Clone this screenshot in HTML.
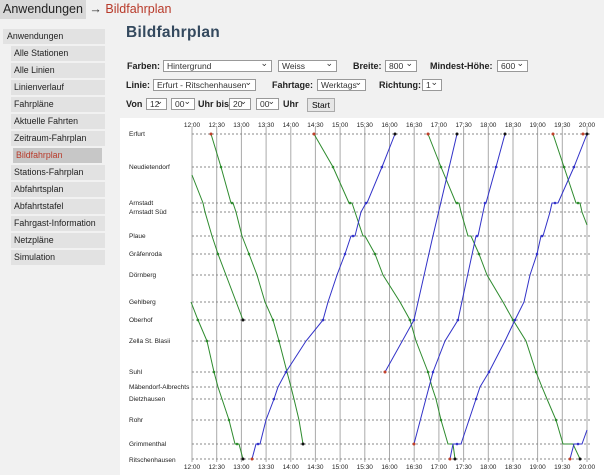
<!DOCTYPE html>
<html><head><meta charset="utf-8"><style>
body{margin:0;width:604px;height:475px;background:#f1f1f1;font-family:"Liberation Sans",sans-serif;position:relative;overflow:hidden}
.top{position:absolute;left:0;top:0;height:19px;font-size:12.5px;line-height:19px}
.top .a{background:#d8d8d8;padding:0 3px;color:#222;display:inline-block}
.top .b{color:#b83a2a}
.nav{position:absolute;left:3px;top:29px;width:102px}
.nav div{font-size:8.8px;color:#222;background:#e2e2e2;height:15px;line-height:15px;margin-bottom:2px;padding-left:4px}
.nav div.s{margin-left:8px;padding-left:3px}
.nav div.sel{background:#c7c7c7;color:#b83a2a;margin-left:10px;margin-right:3px}
h1{position:absolute;left:126px;top:24px;margin:0;font-size:15.5px;color:#34495e;font-weight:bold;letter-spacing:0.3px}
.l{position:absolute;font-size:9px;font-weight:bold;color:#222;white-space:nowrap;line-height:12px}
.sl{position:absolute;box-sizing:border-box;border:1px solid #999;background:#fff;height:12px;line-height:10px;font-size:8.5px;padding:0 3px;color:#333;white-space:nowrap;overflow:hidden}
.sl:after{content:"⌄";position:absolute;right:3px;top:-3px;font-size:9px}
.btn{position:absolute;box-sizing:border-box;border:1px solid #aaa;background:#e6e6e6;font-size:8.5px;height:14px;line-height:12px;text-align:center}
svg{position:absolute;left:0;top:0}
</style></head><body>
<div class="top"><span class="a">Anwendungen</span> <span style="color:#333">→</span> <span class="b">Bildfahrplan</span></div>
<div class="nav">
<div>Anwendungen</div>
<div class="s">Alle Stationen</div><div class="s">Alle Linien</div><div class="s">Linienverlauf</div><div class="s">Fahrpläne</div><div class="s">Aktuelle Fahrten</div><div class="s">Zeitraum-Fahrplan</div><div class="s sel">Bildfahrplan</div><div class="s">Stations-Fahrplan</div><div class="s">Abfahrtsplan</div><div class="s">Abfahrtstafel</div><div class="s">Fahrgast-Information</div><div class="s">Netzpläne</div><div class="s">Simulation</div>
</div>
<h1>Bildfahrplan</h1>
<span class="l" style="left:127px;top:60px">Farben:</span>
<span class="sl" style="left:163px;top:60px;width:109px">Hintergrund</span>
<span class="sl" style="left:278px;top:60px;width:59px">Weiss</span>
<span class="l" style="left:353px;top:60px">Breite:</span>
<span class="sl" style="left:385px;top:60px;width:32px">800</span>
<span class="l" style="left:430px;top:60px">Mindest-Höhe:</span>
<span class="sl" style="left:497px;top:60px;width:31px">600</span>
<span class="l" style="left:126px;top:79px">Linie:</span>
<span class="sl" style="left:153px;top:79px;width:103px">Erfurt - Ritschenhausen</span>
<span class="l" style="left:272px;top:79px">Fahrtage:</span>
<span class="sl" style="left:317px;top:79px;width:49px">Werktags</span>
<span class="l" style="left:379px;top:79px">Richtung:</span>
<span class="sl" style="left:422px;top:79px;width:20px">1</span>
<span class="l" style="left:126px;top:98px">Von</span>
<span class="sl" style="left:146px;top:98px;width:21px">12</span>
<span class="sl" style="left:171px;top:98px;width:24px">00</span>
<span class="l" style="left:198px;top:98px">Uhr bis</span>
<span class="sl" style="left:229px;top:98px;width:22px">20</span>
<span class="sl" style="left:256px;top:98px;width:23px">00</span>
<span class="l" style="left:283px;top:98px">Uhr</span>
<span class="btn" style="left:307px;top:98px;width:28px">Start</span>
<svg width="604" height="475" font-family="Liberation Sans, sans-serif">
<rect x="120" y="118" width="484" height="357" fill="#fff"/>
<g stroke="#aaa" stroke-width="1">
<line x1="192" y1="127" x2="192" y2="462"/><line x1="216.7" y1="127" x2="216.7" y2="462"/><line x1="241.4" y1="127" x2="241.4" y2="462"/><line x1="266.1" y1="127" x2="266.1" y2="462"/><line x1="290.8" y1="127" x2="290.8" y2="462"/><line x1="315.4" y1="127" x2="315.4" y2="462"/><line x1="340.1" y1="127" x2="340.1" y2="462"/><line x1="364.8" y1="127" x2="364.8" y2="462"/><line x1="389.5" y1="127" x2="389.5" y2="462"/><line x1="414.2" y1="127" x2="414.2" y2="462"/><line x1="438.9" y1="127" x2="438.9" y2="462"/><line x1="463.6" y1="127" x2="463.6" y2="462"/><line x1="488.3" y1="127" x2="488.3" y2="462"/><line x1="513" y1="127" x2="513" y2="462"/><line x1="537.6" y1="127" x2="537.6" y2="462"/><line x1="562.3" y1="127" x2="562.3" y2="462"/><line x1="587" y1="127" x2="587" y2="462"/>
</g>
<g stroke="#888" stroke-width="1" stroke-dasharray="2,2">
<line x1="192" y1="134" x2="590" y2="134"/><line x1="192" y1="167" x2="590" y2="167"/><line x1="192" y1="203" x2="590" y2="203"/><line x1="192" y1="212" x2="590" y2="212"/><line x1="192" y1="236" x2="590" y2="236"/><line x1="192" y1="254" x2="590" y2="254"/><line x1="192" y1="275" x2="590" y2="275"/><line x1="192" y1="302" x2="590" y2="302"/><line x1="192" y1="320" x2="590" y2="320"/><line x1="192" y1="341" x2="590" y2="341"/><line x1="192" y1="372" x2="590" y2="372"/><line x1="192" y1="387" x2="590" y2="387"/><line x1="192" y1="399" x2="590" y2="399"/><line x1="192" y1="420" x2="590" y2="420"/><line x1="192" y1="444" x2="590" y2="444"/><line x1="192" y1="459" x2="590" y2="459"/>
</g>
<g font-size="6.5" fill="#222">
<text x="129" y="136">Erfurt</text><text x="129" y="169">Neudietendorf</text><text x="129" y="205">Arnstadt</text><text x="129" y="214">Arnstadt Süd</text><text x="129" y="238">Plaue</text><text x="129" y="256">Gräfenroda</text><text x="129" y="277">Dörnberg</text><text x="129" y="304">Gehlberg</text><text x="129" y="322">Oberhof</text><text x="129" y="343">Zella St. Blasii</text><text x="129" y="374">Suhl</text><text x="129" y="389">Mäbendorf-Albrechts</text><text x="129" y="401">Dietzhausen</text><text x="129" y="422">Rohr</text><text x="129" y="446">Grimmenthal</text><text x="129" y="462">Ritschenhausen</text>
</g>
<g font-size="6.5" fill="#222" text-anchor="middle">
<text x="192" y="127">12:00</text><text x="216.7" y="127">12:30</text><text x="241.4" y="127">13:00</text><text x="266.1" y="127">13:30</text><text x="290.8" y="127">14:00</text><text x="315.4" y="127">14:30</text><text x="340.1" y="127">15:00</text><text x="364.8" y="127">15:30</text><text x="389.5" y="127">16:00</text><text x="414.2" y="127">16:30</text><text x="438.9" y="127">17:00</text><text x="463.6" y="127">17:30</text><text x="488.3" y="127">18:00</text><text x="513" y="127">18:30</text><text x="537.6" y="127">19:00</text><text x="562.3" y="127">19:30</text><text x="587" y="127">20:00</text>
<text x="192" y="469">12:00</text><text x="216.7" y="469">12:30</text><text x="241.4" y="469">13:00</text><text x="266.1" y="469">13:30</text><text x="290.8" y="469">14:00</text><text x="315.4" y="469">14:30</text><text x="340.1" y="469">15:00</text><text x="364.8" y="469">15:30</text><text x="389.5" y="469">16:00</text><text x="414.2" y="469">16:30</text><text x="438.9" y="469">17:00</text><text x="463.6" y="469">17:30</text><text x="488.3" y="469">18:00</text><text x="513" y="469">18:30</text><text x="537.6" y="469">19:00</text><text x="562.3" y="469">19:30</text><text x="587" y="469">20:00</text>
</g>
<g fill="none" stroke="#2e8b2e" stroke-width="1">
<polyline points="192,175 203,203 205,212 212,236 218,254 243,320"/>
<polyline points="211,134 221,167 231,203 233,203 236,212 242,236 249,254 257,275 265,302 273,320 279,341 287,372 291,387 294,399 299,420 303,444"/>
<polyline points="191,302 198,320 207,341 214,372 218,387 222,399 229,420 235,444 239,444 243,459"/>
<polyline points="314,134 333,167 349,203 352,203 355,212 363,236 365,236 375,254 383,275 400,302 410,320 416,341 428,372 432,387 436,399 441,420 448,444 453,444 455,459"/>
<polyline points="428,134 441,167 456,203 459,203 461,212 468,236 471,236 479,254 487,275 503,302 513,320 526,341 536,372 542,387 547,399 556,420 563,444 573,444 580,459"/>
<polyline points="553,134 564,167 576,203 580,203 582,212 587,225"/>
</g>
<g fill="none" stroke="#3232c8" stroke-width="1">
<polyline points="252,459 256,444 260,444 266,420 274,399 278,387 286,372 306,341 323,320 328,302 337,275 345,254 351,236 355,236 361,212 366,203 367,203 382,167 395,134"/>
<polyline points="385,372 414,320 432,240 457,134"/>
<polyline points="414,444 433,372 445,341 458,320 476,236 478,236 485,203 486,203 496,167 505,134"/>
<polyline points="450,459 453,444 461,444 469,420 476,399 480,387 489,372 505,341 515,320 524,302 530,275 537,254 541,236 543,236 550,212 552,203 558,203 574,167 587,134"/>
<polyline points="570,459 574,444 582,444 587,430"/>
</g>
<g fill="#2e8b2e"><circle cx="221" cy="167" r="1.3"/><circle cx="232" cy="203" r="1.3"/><circle cx="249" cy="254" r="1.3"/><circle cx="273" cy="320" r="1.3"/><circle cx="279" cy="341" r="1.3"/><circle cx="218" cy="254" r="1.3"/><circle cx="198" cy="320" r="1.3"/><circle cx="207" cy="341" r="1.3"/><circle cx="214" cy="372" r="1.3"/><circle cx="229" cy="420" r="1.3"/><circle cx="237" cy="444" r="1.3"/><circle cx="333" cy="167" r="1.3"/><circle cx="350" cy="203" r="1.3"/><circle cx="375" cy="254" r="1.3"/><circle cx="410" cy="320" r="1.3"/><circle cx="428" cy="372" r="1.3"/><circle cx="441" cy="420" r="1.3"/><circle cx="441" cy="167" r="1.3"/><circle cx="457" cy="203" r="1.3"/><circle cx="479" cy="254" r="1.3"/><circle cx="513" cy="320" r="1.3"/><circle cx="536" cy="372" r="1.3"/><circle cx="556" cy="420" r="1.3"/><circle cx="564" cy="167" r="1.3"/><circle cx="578" cy="203" r="1.3"/></g>
<g fill="#3232c8"><circle cx="258" cy="444" r="1.3"/><circle cx="274" cy="399" r="1.3"/><circle cx="286" cy="372" r="1.3"/><circle cx="323" cy="320" r="1.3"/><circle cx="345" cy="254" r="1.3"/><circle cx="353" cy="236" r="1.3"/><circle cx="366" cy="203" r="1.3"/><circle cx="382" cy="167" r="1.3"/><circle cx="414" cy="320" r="1.3"/><circle cx="433" cy="372" r="1.3"/><circle cx="458" cy="320" r="1.3"/><circle cx="477" cy="236" r="1.3"/><circle cx="485" cy="203" r="1.3"/><circle cx="496" cy="167" r="1.3"/><circle cx="457" cy="444" r="1.3"/><circle cx="476" cy="399" r="1.3"/><circle cx="489" cy="372" r="1.3"/><circle cx="515" cy="320" r="1.3"/><circle cx="537" cy="254" r="1.3"/><circle cx="542" cy="236" r="1.3"/><circle cx="555" cy="203" r="1.3"/><circle cx="574" cy="167" r="1.3"/><circle cx="578" cy="444" r="1.3"/></g>
<g fill="#c0402a"><circle cx="211" cy="134" r="1.5"/><circle cx="314" cy="134" r="1.5"/><circle cx="428" cy="134" r="1.5"/><circle cx="553" cy="134" r="1.5"/><circle cx="583" cy="134" r="1.5"/><circle cx="252" cy="459" r="1.5"/><circle cx="385" cy="372" r="1.5"/><circle cx="414" cy="444" r="1.5"/><circle cx="450" cy="459" r="1.5"/><circle cx="570" cy="459" r="1.5"/></g>
<g fill="#111"><circle cx="395" cy="134" r="1.5"/><circle cx="457" cy="134" r="1.5"/><circle cx="505" cy="134" r="1.5"/><circle cx="587" cy="134" r="1.5"/><circle cx="243" cy="320" r="1.5"/><circle cx="303" cy="444" r="1.5"/><circle cx="243" cy="459" r="1.5"/><circle cx="455" cy="459" r="1.5"/><circle cx="580" cy="459" r="1.5"/></g>
</svg>
</body></html>
